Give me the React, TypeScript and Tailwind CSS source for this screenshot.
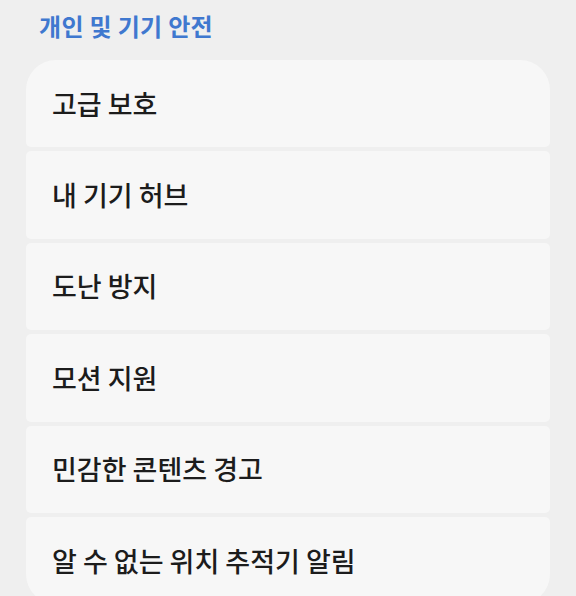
const items = ['고급 보호', '내 기기 허브', '도난 방지', '모션 지원', '민감한 콘텐츠 경고', '알 수 없는 위치 추적기 알림']

export default function App() {
  return (
    <div
      className="h-[596px] w-[576px] overflow-hidden bg-[#efefef]"
      style={{ fontFamily: '"Noto Sans CJK KR", "Noto Sans", sans-serif' }}
    >
      <h2 className="px-[39px] pt-[10px] text-[24px] font-bold leading-[32px] tracking-[0.3px] text-[#3f78cf]">개인 및 기기 안전</h2>
      <div className="mx-[26px] mt-[18px] flex flex-col gap-[4px]">
        {items.map((label, i) => (
          <div
            key={label}
            className={
              'flex h-[87.4px] shrink-0 items-center bg-[#f7f7f7] px-[26px] ' +
              (i === 0 ? 'rounded-t-[30px] rounded-b-[5px]' : i === items.length - 1 ? 'rounded-t-[5px] rounded-b-[30px]' : 'rounded-[5px]')
            }
          >
            <span className="text-[27px] font-medium leading-[36px] text-[#1c1c1c]">{label}</span>
          </div>
        ))}
      </div>
    </div>
  )
}
